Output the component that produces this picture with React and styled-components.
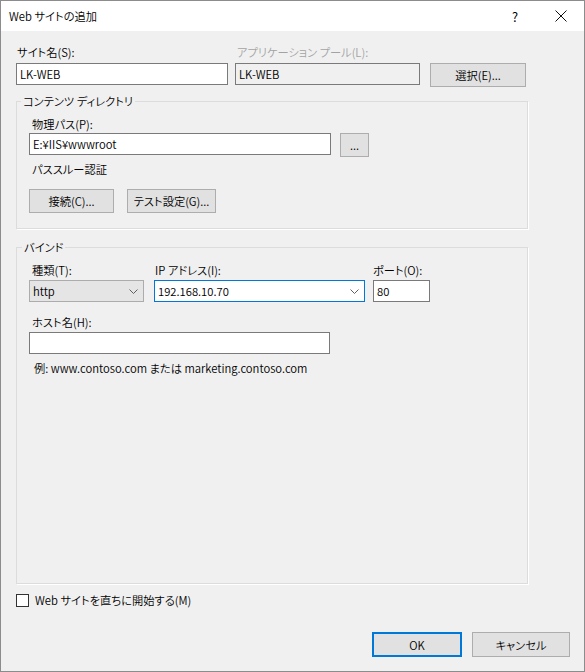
import React from 'react';
import styled, { createGlobalStyle } from 'styled-components';

const GlobalStyle = createGlobalStyle`
  html, body {
    margin: 0;
    padding: 0;
    background: #fff;
  }
  body {
    font-family: "Noto Sans CJK JP", "Noto Sans", sans-serif;
    font-size: 11.25px;
    font-weight: 350;
    color: #000;
    font-feature-settings: "palt";
  }
`;

const Window = styled.div`
  box-sizing: border-box;
  width: 585px;
  height: 672px;
  border: 1px solid #8c8c8c;
  background: #f0f0f0;
  display: flex;
  flex-direction: column;
`;

const TitleBar = styled.div`
  flex: none;
  height: 30px;
  background: #fff;
  display: flex;
  align-items: center;
  padding-left: 8px;
`;

const Title = styled.div`
  flex: 1;
`;

const TitleButton = styled.div`
  width: 46px;
  height: 30px;
  display: flex;
  align-items: center;
  justify-content: center;
  font-size: 13px;
`;

const Body = styled.div`
  flex: 1;
  display: flex;
  flex-direction: column;
  padding: 13px 14px 14px 15px;
`;

const Row = styled.div`
  display: flex;
  align-items: flex-start;
  gap: ${p => p.$gap || 0}px;
  margin-top: ${p => p.$top || 0}px;
`;

const Field = styled.div`
  display: flex;
  flex-direction: column;
  margin-right: ${p => p.$right || 0}px;
`;

const Label = styled.div`
  height: 16px;
  line-height: 16px;
  padding-left: ${p => p.$indent ?? 1}px;
  margin-top: ${p => p.$top || 0}px;
  margin-bottom: ${p => p.$below ?? 3}px;
  color: ${p => (p.$disabled ? '#a3a3a3' : '#000')};
  white-space: nowrap;
`;

const Text = styled.div`
  line-height: 16px;
  padding-left: ${p => p.$indent || 0}px;
  margin-top: ${p => p.$top || 0}px;
`;

const TextBox = styled.div`
  box-sizing: border-box;
  width: ${p => p.$width}px;
  height: 22px;
  display: flex;
  align-items: center;
  padding: 0 3px;
  border: 1px solid ${p => (p.$focused ? '#0078d7' : '#7a7a7a')};
  background: ${p => (p.$readOnly ? '#f0f0f0' : '#fff')};
  white-space: nowrap;
`;

const Select = styled(TextBox)`
  justify-content: space-between;
  padding-right: 5px;
  background: ${p => (p.$focused ? '#fff' : '#e5e5e5')};
  border-color: ${p => (p.$focused ? '#0078d7' : '#acacac')};
`;

const Button = styled.div`
  box-sizing: border-box;
  width: ${p => p.$width}px;
  height: ${p => p.$height || 24}px;
  margin-top: ${p => p.$top || 0}px;
  display: flex;
  align-items: center;
  justify-content: center;
  background: #e1e1e1;
  border: ${p => (p.$default ? '2px solid #0078d7' : '1px solid #adadad')};
  white-space: nowrap;
`;

const Group = styled.fieldset`
  box-sizing: border-box;
  width: 512px;
  margin: ${p => p.$top || 0}px 0 0;
  padding: 7px 12px ${p => p.$bottom || 15}px;
  border: 1px solid #dcdcdc;
  box-shadow: 1px 1px 0 #fff;
  min-width: 0;
  flex: ${p => (p.$grow ? 1 : 'none')};
`;

const Legend = styled.legend`
  margin-left: ${p => p.$indent || 0}px;
  padding: 0 2px;
  line-height: 16px;
`;

const CheckRow = styled.label`
  display: flex;
  align-items: center;
  gap: 6px;
  margin-top: 8px;
  line-height: 16px;
`;

const CheckBox = styled.span`
  box-sizing: border-box;
  width: 13px;
  height: 13px;
  border: 1px solid #333;
  background: #fff;
`;

const Footer = styled.div`
  display: flex;
  justify-content: flex-end;
  gap: 10px;
  margin-top: 24px;
`;

const Chevron = () => (
  <svg width="9" height="5" viewBox="0 0 9 5">
    <polyline points="0.5,0.5 4.5,4.5 8.5,0.5" fill="none" stroke="#606060" strokeWidth="1" />
  </svg>
);

const CloseIcon = () => (
  <svg width="12" height="12" viewBox="0 0 12 12">
    <path d="M0.5 0.5 L11.5 11.5 M11.5 0.5 L0.5 11.5" stroke="#111" strokeWidth="1" />
  </svg>
);

export default function App() {
  return (
    <>
      <GlobalStyle />
      <Window>
        <TitleBar>
          <Title>Web サイトの追加</Title>
          <TitleButton>?</TitleButton>
          <TitleButton>
            <CloseIcon />
          </TitleButton>
        </TitleBar>

        <Body>
          <Row>
            <Field $right={7}>
              <Label>サイト名(S):</Label>
              <TextBox $width={212}>LK-WEB</TextBox>
            </Field>
            <Field $right={10}>
              <Label $disabled $indent={2}>アプリケーション プール(L):</Label>
              <TextBox $width={185} $readOnly>LK-WEB</TextBox>
            </Field>
            <Button $width={96} $top={19}>選択(E)...</Button>
          </Row>

          <Group $top={6}>
            <Legend $indent={-8}>コンテンツ ディレクトリ</Legend>
            <Label $indent={3} $below={1}>物理パス(P):</Label>
            <Row $gap={9}>
              <TextBox $width={302}>E:¥IIS¥wwwroot</TextBox>
              <Button $width={29}>...</Button>
            </Row>
            <Text $indent={3} $top={4}>パススルー認証</Text>
            <Row $gap={13} $top={12}>
              <Button $width={85}>接続(C)...</Button>
              <Button $width={89}>テスト設定(G)...</Button>
            </Row>
          </Group>

          <Group $top={10} $grow>
            <Legend $indent={-7}>バインド</Legend>
            <Row>
              <Field $right={10}>
                <Label $indent={3} $below={2}>種類(T):</Label>
                <Select $width={115}>
                  http
                  <Chevron />
                </Select>
              </Field>
              <Field $right={8}>
                <Label $below={2}>IP アドレス(I):</Label>
                <Select $width={211} $focused>
                  192.168.10.70
                  <Chevron />
                </Select>
              </Field>
              <Field>
                <Label $indent={0} $below={2}>ポート(O):</Label>
                <TextBox $width={57}>80</TextBox>
              </Field>
            </Row>
            <Field>
              <Label $indent={3} $below={2} $top={12}>ホスト名(H):</Label>
              <TextBox $width={301} />
            </Field>
            <Text $indent={5} $top={6}>例: www.contoso.com または marketing.contoso.com</Text>
          </Group>

          <CheckRow>
            <CheckBox />
            Web サイトを直ちに開始する(M)
          </CheckRow>

          <Footer>
            <Button $width={90} $height={25} $default>OK</Button>
            <Button $width={98} $height={25}>キャンセル</Button>
          </Footer>
        </Body>
      </Window>
    </>
  );
}
